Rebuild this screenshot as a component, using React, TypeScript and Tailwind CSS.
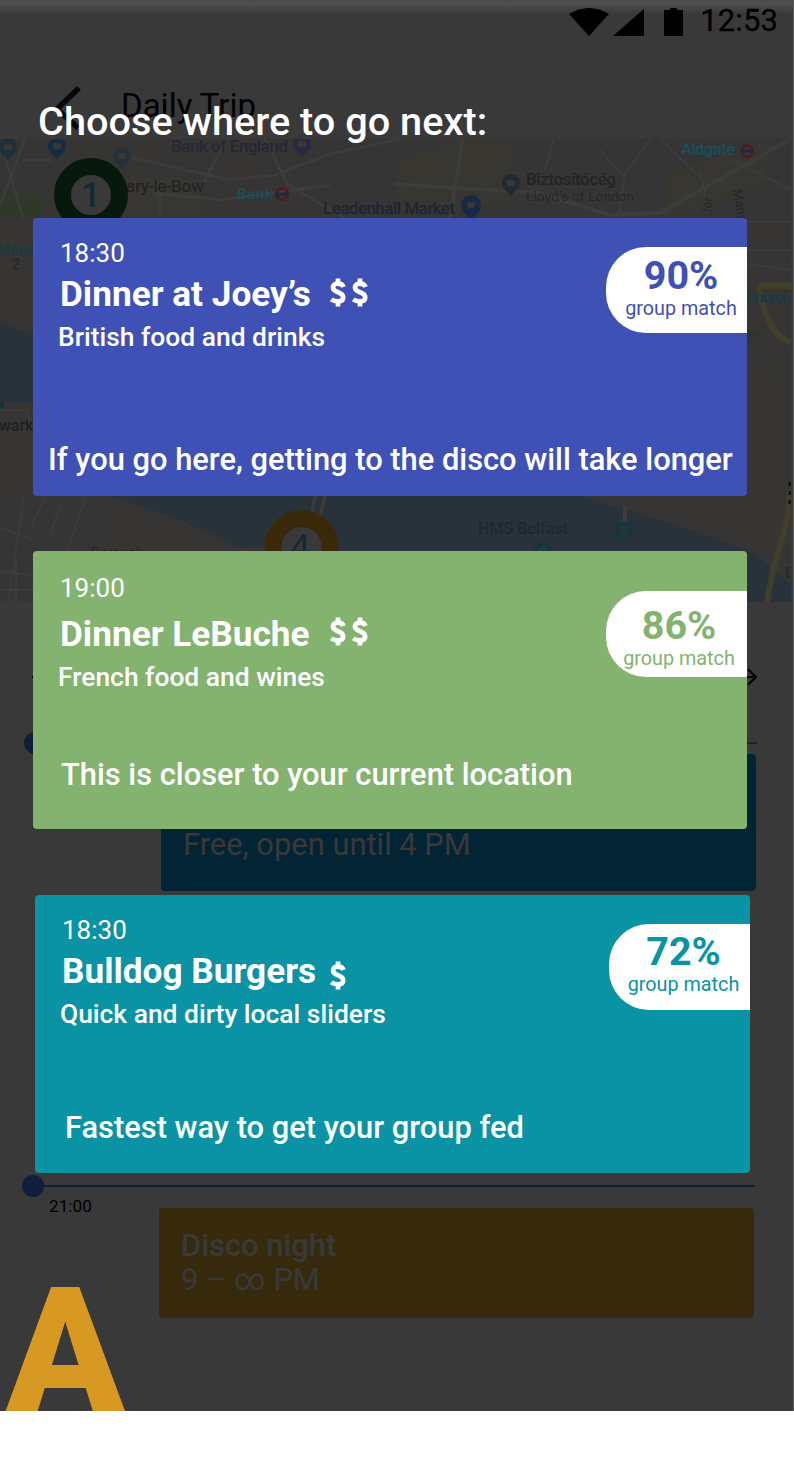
import React from "react";

type Place = {
  time: string;
  name: string;
  price: number;
  about: string;
  match: string;
  note: string;
  card: string;
  tint: string;
  titleGap: string;
  subGap: string;
  top: string;
  priceShift: string;
  badge: string;
  badgePad: string;
  noteBox: string;
};

const places: Place[] = [
  {
    time: "18:30", name: "Dinner at Joey’s", price: 2, about: "British food and drinks", match: "90%",
    note: "If you go here, getting to the disco will take longer",
    card: "ml-[33px] mt-[76px] w-[714px] bg-[#3f51b5]", tint: "text-[#3f51b5]",
    top: "pt-[22px]", titleGap: "mt-[11px]", subGap: "mt-[12px]", priceShift: "ml-[19px] mb-[4px]",
    badge: "mt-[29px]", badgePad: "pt-[9px] pl-[9px]", noteBox: "mt-[93px] ml-[15px]",
  },
  {
    time: "19:00", name: "Dinner LeBuche", price: 2, about: "French food and wines", match: "86%",
    note: "This is closer to your current location",
    card: "ml-[33px] mt-[55px] w-[714px] bg-[#84b26f]", tint: "text-[#84b26f]",
    top: "pt-[24px]", titleGap: "mt-[16px]", subGap: "mt-[12px]", priceShift: "ml-[20px] mb-[6px]",
    badge: "mt-[40px]", badgePad: "pt-[15px] pl-[5px]", noteBox: "mt-[68px] ml-[28px]",
  },
  {
    time: "18:30", name: "Bulldog Burgers", price: 1, about: "Quick and dirty local sliders", match: "72%",
    note: "Fastest way to get your group fed",
    card: "ml-[35px] mt-[66px] w-[715px] bg-[#0a92a5]", tint: "text-[#0a92a5]",
    top: "pt-[22px]", titleGap: "mt-[11px]", subGap: "mt-[12px]", priceShift: "ml-[14px] mt-[7px]",
    badge: "mt-[29px]", badgePad: "pt-[8px] pl-[8px]", noteBox: "mt-[84px] ml-[30px]",
  },
];

function Dollar() {
  return (
    <svg className="h-[29px] w-[16px]" viewBox="0 0 16 29" fill="none" stroke="white" strokeWidth="4.700">
      <path d="M13.500 9C12.800 6.500 10.800 5.600 8 5.600 5 5.600 3 7 3 9.400 3 11.800 5 13 8 14.200 11.500 15.500 13.200 17 13.200 19.400 13.200 22 11 23.300 8 23.300 5.400 23.300 3 22.600 1.300 21.300" />
      <path d="M8 .5V5.500M8 23.500V28.500" />
    </svg>
  );
}

function PlaceCard({ p }: { p: Place }) {
  return (
    <button className={`flex h-[278px] shrink-0 flex-col rounded-[4px] text-left text-white ${p.card}`}>
      <span className="flex w-full justify-between">
        <span className={`flex flex-col pl-[25px] whitespace-nowrap ${p.top}`}>
          <span className="h-[26px] pl-[2px] text-[26px] leading-[26px]">{p.time}</span>
          <span className={`flex h-[35px] items-center pl-[2px] text-[35.2px] leading-[35px] font-bold ${p.titleGap}`}>
            {p.name}
            <span className={`flex gap-[6px] ${p.priceShift}`}>
              {Array.from({ length: p.price }, (_, i) => (
                <Dollar key={i} />
              ))}
            </span>
          </span>
          <span className={`h-[27px] text-[26.4px] leading-[27px] font-medium ${p.subGap}`}>{p.about}</span>
        </span>
        <span className={`flex h-[86px] w-[141px] flex-col items-center rounded-l-[40px] bg-white whitespace-nowrap ${p.badge} ${p.badgePad} ${p.tint}`}>
          <span className="text-[39.5px] leading-[40px] font-bold">{p.match}</span>
          <span className="mt-[3px] text-[19.8px] leading-[20px]">group match</span>
        </span>
      </span>
      <span className={`text-[30.85px] leading-[31px] font-medium whitespace-nowrap ${p.noteBox}`}>{p.note}</span>
    </button>
  );
}

function Pin({ x, y, color, r = 9 }: { x: number; y: number; color: string; r?: number }) {
  return (
    <g>
      <path d={`M${x - r} ${y}a${r} ${r} 0 0 1 ${2 * r} 0c0 ${r * 0.8}-${r * 0.7} ${r * 0.9}-${r} ${r * 1.5}c-${r * 0.3}-${r * 0.6}-${r}-${r * 0.7}-${r}-${r * 1.5}Z`} fill={color} />
      <rect x={x - 4} y={y - 3} width="8" height="6" rx="2" fill="#383838" />
    </g>
  );
}

function Roundel({ x, y }: { x: number; y: number }) {
  return (
    <g>
      <circle cx={x} cy={y} r="5.5" fill="none" stroke="#4b1c20" strokeWidth="3" />
      <path d={`M${x - 7} ${y}h14`} stroke="#202644" strokeWidth="3" />
    </g>
  );
}

function CityMap() {
  return (
    <svg className="block h-[463px] w-[791px]" viewBox="0 139 791 463" fontFamily="Roboto, sans-serif">
      <rect y="139" width="791" height="463" fill="#373533" />
      <path d="M330 139H791V218H330Z" fill="#353535" />
      <path d="M0 139h50v79H0zM0 496H95l15 106H0z" fill="#353535" />
      <g fill="#383630">
        <path d="M395 160l60-21h60v64l-120 15z" />
        <path d="M665 175l100-36v45l-100 34z" />
        <path d="M110 170l80 10 20 38h-90z" />
      </g>
      <path d="M0 192l43 4-3 22H0z" fill="#2f3829" />
      <path d="M747 331l22 2-22 8z" fill="#2d382d" />
      <g fill="none" stroke="#3c3c3c" strokeWidth="3">
        <path d="M0 205L25 139M5 157L23 218M23 160H52M120 155L230 180 275 175 330 154 400 139" />
        <path d="M204 182L226 139M265 139L288 185 345 218M155 193L220 200 330 185M160 185V218" />
        <path d="M450 218L463 139M394 184L540 193 610 215 660 213 791 139" strokeWidth="4" />
        <path d="M545 170L554 139M600 150L625 178M619 215L625 174 650 139M700 171L710 218M730 160L791 190M660 139L700 177" strokeWidth="2" />
        <path d="M747 250H791M747 264L791 270M747 222H791" strokeWidth="2" />
      </g>
      <path d="M0 322L33 335V403H0zM112 496L180 520 240 548 265 547 340 550H720L747 563 791 583V602H735L747 551 690 529 580 496z" fill="#28323a" />
      <path d="M735 545Q765 555 791 589V602H735z" fill="#28323a" />
      <path d="M580 496L690 529 747 551 768 561 791 583V496z" fill="#373533" />
      <g fill="none" stroke="#3d3c3b" strokeWidth="2">
        <path d="M24 496L8 602M45 497L30 530M62 500L50 535M86 496L67 551M0 527L33 540M0 571L33 576M16 560V602M0 590H33" />
        <path d="M315 496L311 518M325 496L319 521" strokeWidth="3" />
        <path d="M625 505V522" strokeWidth="4" />
        <path d="M0 410H28V425" />
      </g>
      <path d="M394 510Q420 520 432 548 460 510 510 528M460 499l70 8 110 28" fill="none" stroke="#2a313c" />
      <g fill="none" stroke="#413e2a" strokeWidth="6">
        <path d="M791 286H760Q758 291 763 305 770 333 791 343M790 490Q790 515 781 541 773 567 767 602" />
      </g>
      <path d="M747 362c10-6 30-5 44 5M747 357c12 11 30 6 44 15" fill="none" stroke="#303833" />
      <path d="M790 482v22" stroke="#17110f" strokeWidth="3" strokeDasharray="4 5" />
      <g fontSize="17">
        <text x="171" y="152" textLength="117" fontWeight="500" fill="#252733">Bank of England</text>
        <text x="126" y="192" textLength="78" fill="#202020">ary-le-Bow</text>
        <text x="237" y="199" textLength="36" fontSize="15" fontWeight="500" fill="#1a4e5a">Bank</text>
        <text x="323" y="214" textLength="132" fontWeight="500" fill="#1d2434">Leadenhall Market</text>
        <text x="526" y="185" textLength="90" fontWeight="500" fill="#202427">Biztosítócég</text>
        <text x="526" y="201" textLength="108" fontSize="13" fill="#23282a">Lloyd’s of London</text>
        <text x="681" y="155" textLength="54" fontSize="16" fontWeight="500" fill="#1a4e5a">Aldgate</text>
        <text x="-4" y="255" fontSize="16" fontWeight="500" fill="#1a3a44">Mansion</text>
        <text x="12" y="269" fontSize="14" fill="#242424">2</text>
        <text x="747" y="303" textLength="44" fontSize="16" fontWeight="500" fill="#1a3a44">church</text>
        <text x="-10" y="431" fontSize="16" fontWeight="500" fill="#1d2022">hwark</text>
        <text x="478" y="534" textLength="90" fontSize="16" fontWeight="500" fill="#1e2929">HMS Belfast</text>
        <text x="785" y="578" fontSize="15" fontWeight="500" fill="#1d3028">D</text>
        <text x="91" y="558" fontSize="14" fill="#222">Borough</text>
        <text transform="translate(711 216) rotate(-85)" fontSize="13" fill="#262626">Jer</text>
        <text transform="translate(733 190) rotate(80)" fontSize="13" fill="#262626">Manse</text>
      </g>
      <Roundel x={282} y={194} />
      <Roundel x={747} y={151} />
      <Pin x={8} y={147} color="#203038" />
      <Pin x={57} y={146} color="#142d43" />
      <Pin x={122} y={156} color="#24313a" />
      <Pin x={302} y={144} color="#292840" />
      <Pin x={511} y={183} color="#202a2f" />
      <Pin x={471} y={205} color="#172a45" r={10} />
      <circle cx="0" cy="405" r="4" fill="#123532" />
      <path d="M618 524h12v11h-12z" fill="none" stroke="#15363d" strokeWidth="4" />
      <circle cx="543" cy="551" r="7" fill="#263a3b" stroke="#153534" strokeWidth="3" />
      <circle cx="91" cy="195" r="28.500" fill="#393939" stroke="#07190c" strokeWidth="17" />
      <text x="91" y="207" fontSize="35" fontWeight="500" textAnchor="middle" fill="#142936">1</text>
      <circle cx="301.500" cy="547" r="28.500" fill="#393939" stroke="#39290a" strokeWidth="17" />
      <text x="300" y="559" fontSize="35" textAnchor="middle" fill="#142936">4</text>
    </svg>
  );
}

function TripScreen() {
  return (
    <div className="flex h-[1411px] w-full flex-col border-r border-[#626262] bg-[#393939]">
      <div className="flex h-[139px] flex-col bg-linear-to-b from-[#4d4d4d] from-3% via-[#393939] via-10% to-[#393939]">
        <div className="flex h-[40px] items-start justify-end pt-[8px] pr-[15px]">
          <svg className="h-[28px] w-[115px]" viewBox="569 8 115 28" fill="#000">
            <path d="M569 14Q589 2 609 14L589 36z" />
            <path d="M644 9V36H613z" />
            <path d="M664 10h6V8h7v2h6v26h-19z" />
          </svg>
          <span className="-mt-[3px] ml-[16px] text-[31px] leading-[31px] tracking-[0.1px] text-black [-webkit-text-stroke:0.3px_black]">12:53</span>
        </div>
        <div className="flex pt-[46px] pl-[54px]">
          <svg className="h-[44px] w-[28px]" viewBox="54 84 28 44" fill="none" stroke="#080808" strokeWidth="5.500">
            <path d="M79 86L57 107 78 126" />
          </svg>
          <span className="mt-[3px] ml-[39px] text-[33px] leading-[33px] text-black">Daily Trip</span>
        </div>
      </div>
      <CityMap />
      <div className="flex h-[140px] items-start justify-between pt-[66px] pr-[36px] pl-[32px]">
        <span className="mt-[8px] h-[2px] w-[20px] bg-black" />
        <svg className="h-[20px] w-[20px]" viewBox="0 0 20 20" fill="none" stroke="#000" strokeWidth="2.200">
          <path d="M0 9H19M11 1.300l8 7.700-8 7.700" />
        </svg>
      </div>
      <div className="-mt-[10px] flex h-[22px] items-center pl-[24px]">
        <span className="size-[22px] rounded-full bg-[#0f1f3b]" />
        <span className="h-[2px] w-[711px] bg-[#17233d]" />
      </div>
      <div className="ml-[161px] h-[137px] w-[595px] rounded-[4px] bg-[#022434] pt-[74px] pl-[22px] text-[30.9px] leading-[34px] text-[#393939]">
        Free, open until 4 PM
      </div>
      <div className="mt-[284px] flex h-[22px] items-center pl-[22px]">
        <span className="size-[22px] rounded-full bg-[#0f1f3b]" />
        <span className="h-[2px] w-[711px] bg-[#0f1f3b]" />
      </div>
      <div className="flex">
        <span className="w-[159px] pl-[49px] text-[17.2px] leading-[18px] text-black">21:00</span>
        <div className="mt-[11px] h-[110px] w-[595px] rounded-[4px] bg-[#372a0c] pt-[21px] pl-[22px] text-[30.9px] leading-[34px] text-[#393939]">
          <p className="font-medium">Disco night</p>
          <p>9 – ∞ PM</p>
        </div>
      </div>
    </div>
  );
}

export default function App() {
  return (
    <main className="relative h-[1459px] w-[794px] overflow-hidden bg-white font-[Roboto,sans-serif]">
      <TripScreen />
      <section className="absolute inset-0 flex h-[1411px] flex-col overflow-hidden">
        <h1 className="mt-[102px] ml-[38px] h-[40px] text-[39.7px] leading-[40px] font-medium whitespace-nowrap text-white">
          Choose where to go next:
        </h1>
        {places.map((p) => (
          <PlaceCard key={p.name} p={p} />
        ))}
        <span className="mt-[92px] ml-[6px] text-[174px] leading-[174px] font-black text-[#d79922]">A</span>
      </section>
    </main>
  );
}
